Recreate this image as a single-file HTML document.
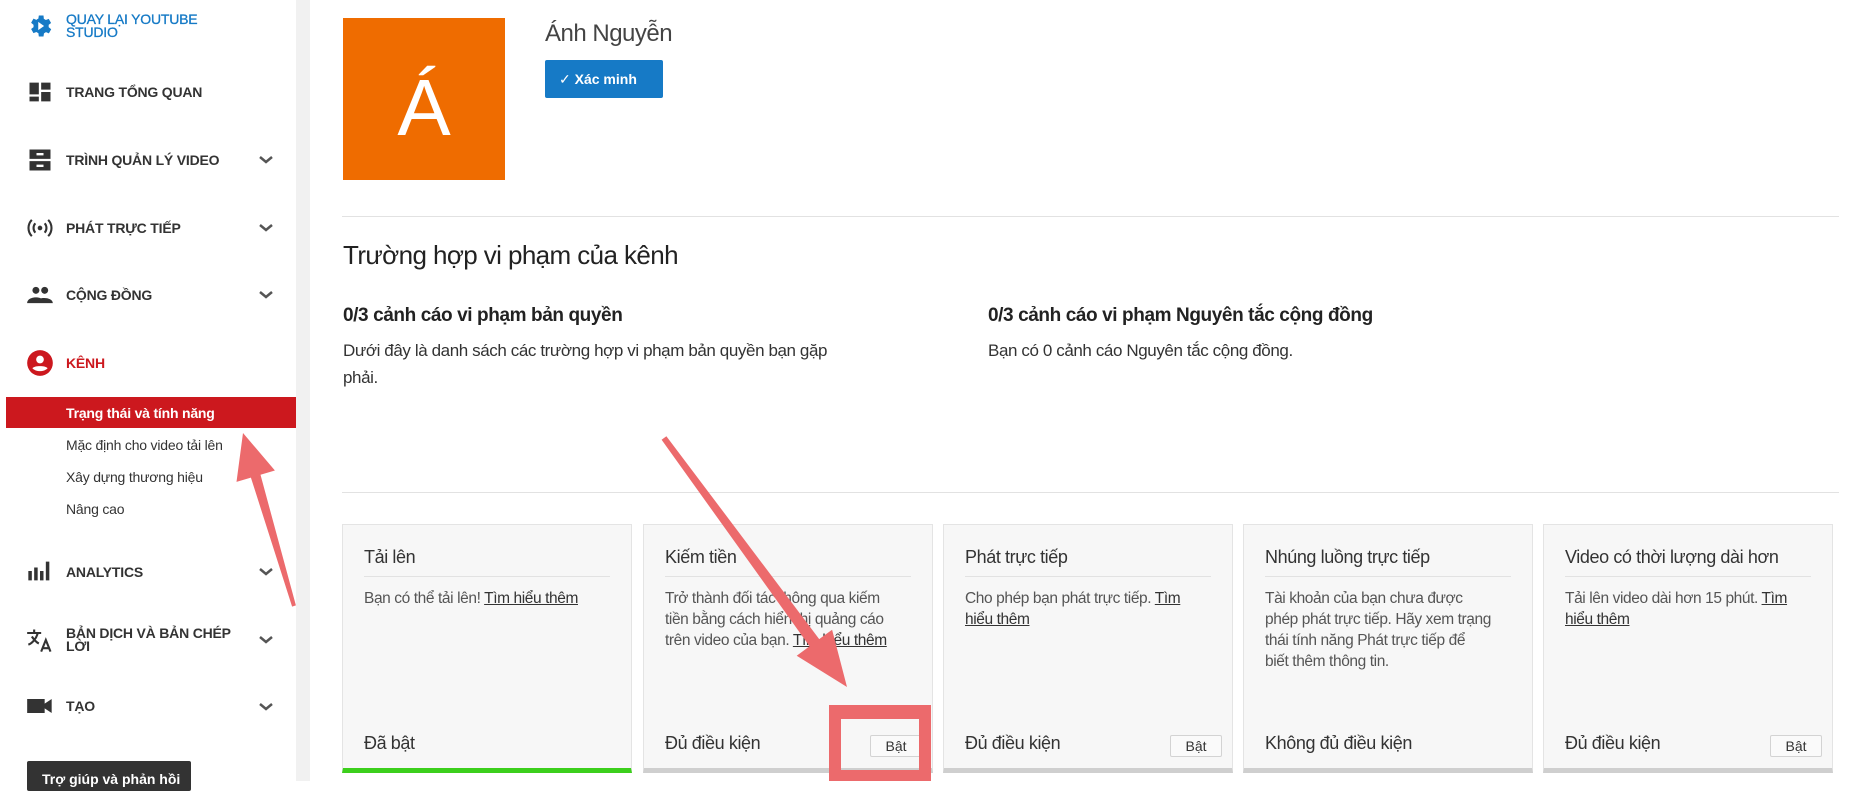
<!DOCTYPE html>
<html><head><meta charset="utf-8">
<style>
*{margin:0;padding:0;box-sizing:border-box}
body{width:1858px;height:781px;overflow:hidden;background:#fff;font-family:"Liberation Sans",sans-serif;color:#333;position:relative}
.side{position:absolute;left:0;top:0;width:296px;height:781px;background:#fff}
.gut{position:absolute;left:296px;top:0;width:14px;height:781px;background:#f1f1f1}
.it{position:absolute;left:66px;font-size:14px;font-weight:bold;color:#333;letter-spacing:-0.2px;line-height:14px}
.ic{position:absolute;left:26px;width:28px;height:28px}
.chev{position:absolute;left:258px;width:16px;height:10px}
.sub{position:absolute;left:66px;font-size:14px;color:#333;letter-spacing:-0.2px}
.abs{position:absolute}
.card{position:absolute;top:524px;width:290px;height:249px;background:#f7f7f7;border:1px solid #e4e4e4;border-bottom:5px solid #cfcfcf}
.card h3{position:absolute;left:21px;top:22px;font-size:18px;font-weight:normal;color:#333;letter-spacing:-0.4px}
.card .ln{position:absolute;left:21px;right:21px;top:51px;border-top:1px solid #e2e2e2}
.card p{position:absolute;left:21px;right:30px;top:63px;font-size:15.5px;line-height:21px;color:#555;letter-spacing:-0.4px}
.card p u{color:#333}
.card .st{position:absolute;left:21px;top:208px;font-size:18px;color:#333;letter-spacing:-0.4px}
.card .bt{position:absolute;right:10px;top:210px;width:52px;height:22px;border:1px solid #d3d3d3;background:#fafafa;font-size:14px;text-align:center;line-height:20px;color:#333;border-radius:2px}
</style></head><body>
<div class="side">
  <svg class="ic" style="top:12px" viewBox="0 0 24 24"><path fill="#167ac6" d="M19.4 13a7.5 7.5 0 000-2l2.1-1.6-2-3.5-2.5 1a7.3 7.3 0 00-1.7-1L15 3h-4l-.4 2.7a7.3 7.3 0 00-1.7 1l-2.5-1-2 3.5L6.5 11a7.5 7.5 0 000 2l-2.1 1.6 2 3.5 2.5-1a7.3 7.3 0 001.7 1L11 21h4l.4-2.7a7.3 7.3 0 001.7-1l2.5 1 2-3.5z"/><path fill="#fff" d="M10.5 8.5v7l5-3.5z"/></svg>
  <div class="it" style="top:13px;color:#167ac6;line-height:13px;font-weight:normal;-webkit-text-stroke:.3px #167ac6">QUAY LẠI YOUTUBE<br>STUDIO</div>
  <svg class="ic" style="top:78px" viewBox="0 0 24 24"><path fill="#333" d="M3 4h8v10H3zM13 4h8v6h-8zM13 12h8v8h-8zM3 16h8v4H3z"/></svg>
  <div class="it" style="top:85px">TRANG TỔNG QUAN</div>
  <svg class="ic" style="top:146px" viewBox="0 0 24 24"><path fill="#333" d="M3 3h18v8H3zM3 13h18v8H3z"/><path fill="#fff" d="M9 6h6v2H9zM9 16h6v2H9z"/></svg>
  <div class="it" style="top:153px">TRÌNH QUẢN LÝ VIDEO</div>
  <svg class="ic" style="top:214px" viewBox="0 0 24 24"><circle cx="12" cy="12" r="2" fill="#333"/><path fill="none" stroke="#333" stroke-width="1.8" d="M8 8a6 6 0 000 8M16 8a6 6 0 010 8M5 5a10 10 0 000 14M19 5a10 10 0 010 14"/></svg>
  <div class="it" style="top:221px">PHÁT TRỰC TIẾP</div>
  <svg class="ic" style="top:281px" viewBox="0 0 24 24"><circle cx="8.5" cy="8" r="3" fill="#333"/><circle cx="16" cy="8" r="3" fill="#333"/><path fill="#333" d="M1 19c0-4 5-5 7.5-5s7.5 1 7.5 5zM14 19c0-2-1-3.3-2-4 4-1.2 11-.2 11 4z"/></svg>
  <div class="it" style="top:288px">CỘNG ĐỒNG</div>
  <svg class="ic" style="top:349px" viewBox="0 0 24 24"><circle cx="12" cy="12" r="11" fill="#cc181e"/><circle cx="12" cy="9" r="3.3" fill="#fff"/><path fill="#fff" d="M5.5 16.5c1.5-2.5 11.5-2.5 13 0-1.5 1.7-4 2.5-6.5 2.5s-5-.8-6.5-2.5z"/></svg>
  <div class="it" style="top:356px;color:#cc181e">KÊNH</div>
  <div class="abs" style="left:6px;top:397px;width:290px;height:31px;background:#cc181e"></div>
  <div class="sub" style="top:405px;color:#fff;font-weight:bold">Trạng thái và tính năng</div>
  <div class="sub" style="top:437px">Mặc định cho video tải lên</div>
  <div class="sub" style="top:469px">Xây dựng thương hiệu</div>
  <div class="sub" style="top:501px">Nâng cao</div>
  <svg class="ic" style="top:557px" viewBox="0 0 24 24"><path fill="#333" d="M2 12h3v8H2zM7 9h3v11H7zM12 12h3v8h-3zM17 4h3v16h-3z"/></svg>
  <div class="it" style="top:565px">ANALYTICS</div>
  <svg class="ic" style="top:626px" viewBox="0 0 24 24"><path fill="none" stroke="#333" stroke-width="1.8" d="M1 6h12M7 3v3M10 6c-1 5-5 9-8 10M5 9c2 3 4 5 6 6M13 22l4-10 4 10M14.5 19h5"/></svg>
  <div class="it" style="top:627px;line-height:13px">BẢN DỊCH VÀ BẢN CHÉP<br>LỜI</div>
  <svg class="ic" style="top:692px" viewBox="0 0 24 24"><path fill="#333" d="M1 6h15v12H1zM16 10l6-4v12l-6-4z"/></svg>
  <div class="it" style="top:699px">TẠO</div>
  <svg class="chev" style="top:155px" viewBox="0 0 16 10"><path d="M2 2l6 5 6-5" fill="none" stroke="#555" stroke-width="2.5"/></svg>
  <svg class="chev" style="top:223px" viewBox="0 0 16 10"><path d="M2 2l6 5 6-5" fill="none" stroke="#555" stroke-width="2.5"/></svg>
  <svg class="chev" style="top:290px" viewBox="0 0 16 10"><path d="M2 2l6 5 6-5" fill="none" stroke="#555" stroke-width="2.5"/></svg>
  <svg class="chev" style="top:567px" viewBox="0 0 16 10"><path d="M2 2l6 5 6-5" fill="none" stroke="#555" stroke-width="2.5"/></svg>
  <svg class="chev" style="top:635px" viewBox="0 0 16 10"><path d="M2 2l6 5 6-5" fill="none" stroke="#555" stroke-width="2.5"/></svg>
  <svg class="chev" style="top:702px" viewBox="0 0 16 10"><path d="M2 2l6 5 6-5" fill="none" stroke="#555" stroke-width="2.5"/></svg>
  <div class="abs" style="left:27px;top:761px;width:164px;height:30px;background:#333;border-radius:2px;color:#fff;font-size:14px;font-weight:bold;padding:10px 0 0 15px">Trợ giúp và phản hồi</div>
</div>
<div class="gut"></div>

<div class="abs" style="left:343px;top:18px;width:162px;height:162px;background:#ef6c00;color:#fff;font-size:80px;text-align:center;line-height:180px">Á</div>
<div class="abs" style="left:545px;top:20px;font-size:24px;color:#444;letter-spacing:-0.5px">Ánh Nguyễn</div>
<div class="abs" style="left:545px;top:60px;width:118px;height:38px;background:#167ac6;border-radius:2px;color:#fff;font-size:14px;font-weight:bold;line-height:38px;padding-left:14px"><span style="font-weight:normal">✓</span> Xác minh</div>
<div class="abs" style="left:342px;top:216px;width:1497px;border-top:1px solid #e2e2e2"></div>
<div class="abs" style="left:343px;top:240px;font-size:26px;color:#222;letter-spacing:-0.6px">Trường hợp vi phạm của kênh</div>
<div class="abs" style="left:343px;top:305px;font-size:19px;font-weight:bold;color:#222;letter-spacing:-0.4px">0/3 cảnh cáo vi phạm bản quyền</div>
<div class="abs" style="left:343px;top:337px;width:560px;font-size:17px;line-height:27px;color:#333;letter-spacing:-0.4px">Dưới đây là danh sách các trường hợp vi phạm bản quyền bạn gặp<br>phải.</div>
<div class="abs" style="left:988px;top:305px;font-size:19px;font-weight:bold;color:#222;letter-spacing:-0.4px">0/3 cảnh cáo vi phạm Nguyên tắc cộng đồng</div>
<div class="abs" style="left:988px;top:337px;font-size:17px;line-height:27px;color:#333;letter-spacing:-0.4px">Bạn có 0 cảnh cáo Nguyên tắc cộng đồng.</div>
<div class="abs" style="left:342px;top:492px;width:1497px;border-top:1px solid #e2e2e2"></div>

<div class="card" style="left:342px;border-bottom-color:#3ccf1c"><h3>Tải lên</h3><div class="ln"></div><p>Bạn có thể tải lên! <u>Tìm hiểu thêm</u></p><div class="st">Đã bật</div></div>
<div class="card" style="left:643px"><h3>Kiếm tiền</h3><div class="ln"></div><p>Trở thành đối tác thông qua kiếm tiền bằng cách hiển thị quảng cáo trên video của bạn. <u>Tìm hiểu thêm</u></p><div class="st">Đủ điều kiện</div><div class="bt">Bật</div></div>
<div class="card" style="left:943px"><h3>Phát trực tiếp</h3><div class="ln"></div><p>Cho phép bạn phát trực tiếp. <u>Tìm hiểu thêm</u></p><div class="st">Đủ điều kiện</div><div class="bt">Bật</div></div>
<div class="card" style="left:1243px"><h3>Nhúng luồng trực tiếp</h3><div class="ln"></div><p style="right:40px">Tài khoản của bạn chưa được phép phát trực tiếp. Hãy xem trạng thái tính năng Phát trực tiếp để biết thêm thông tin.</p><div class="st">Không đủ điều kiện</div></div>
<div class="card" style="left:1543px"><h3>Video có thời lượng dài hơn</h3><div class="ln"></div><p>Tải lên video dài hơn 15 phút. <u>Tìm hiểu thêm</u></p><div class="st">Đủ điều kiện</div><div class="bt">Bật</div></div>

<svg class="abs" style="left:0;top:0" width="1858" height="781">
  <g fill="#ec6a6c" stroke="none">
    <rect x="829" y="705" width="102" height="14"/>
    <rect x="829" y="705" width="12" height="76"/>
    <rect x="919" y="705" width="12" height="76"/>
    <rect x="829" y="770" width="102" height="11"/>
    <polygon points="666.4,436.2 819.2,639.1 832.1,629.7 847,687 796.7,655.7 809.6,646.3 661.6,439.8"/>
    <polygon points="295.9,605.4 260.5,474.8 274.9,470.5 243,433 236.5,481.9 250.9,477.6 292.1,606.6"/>
  </g>
</svg>
</body></html>
